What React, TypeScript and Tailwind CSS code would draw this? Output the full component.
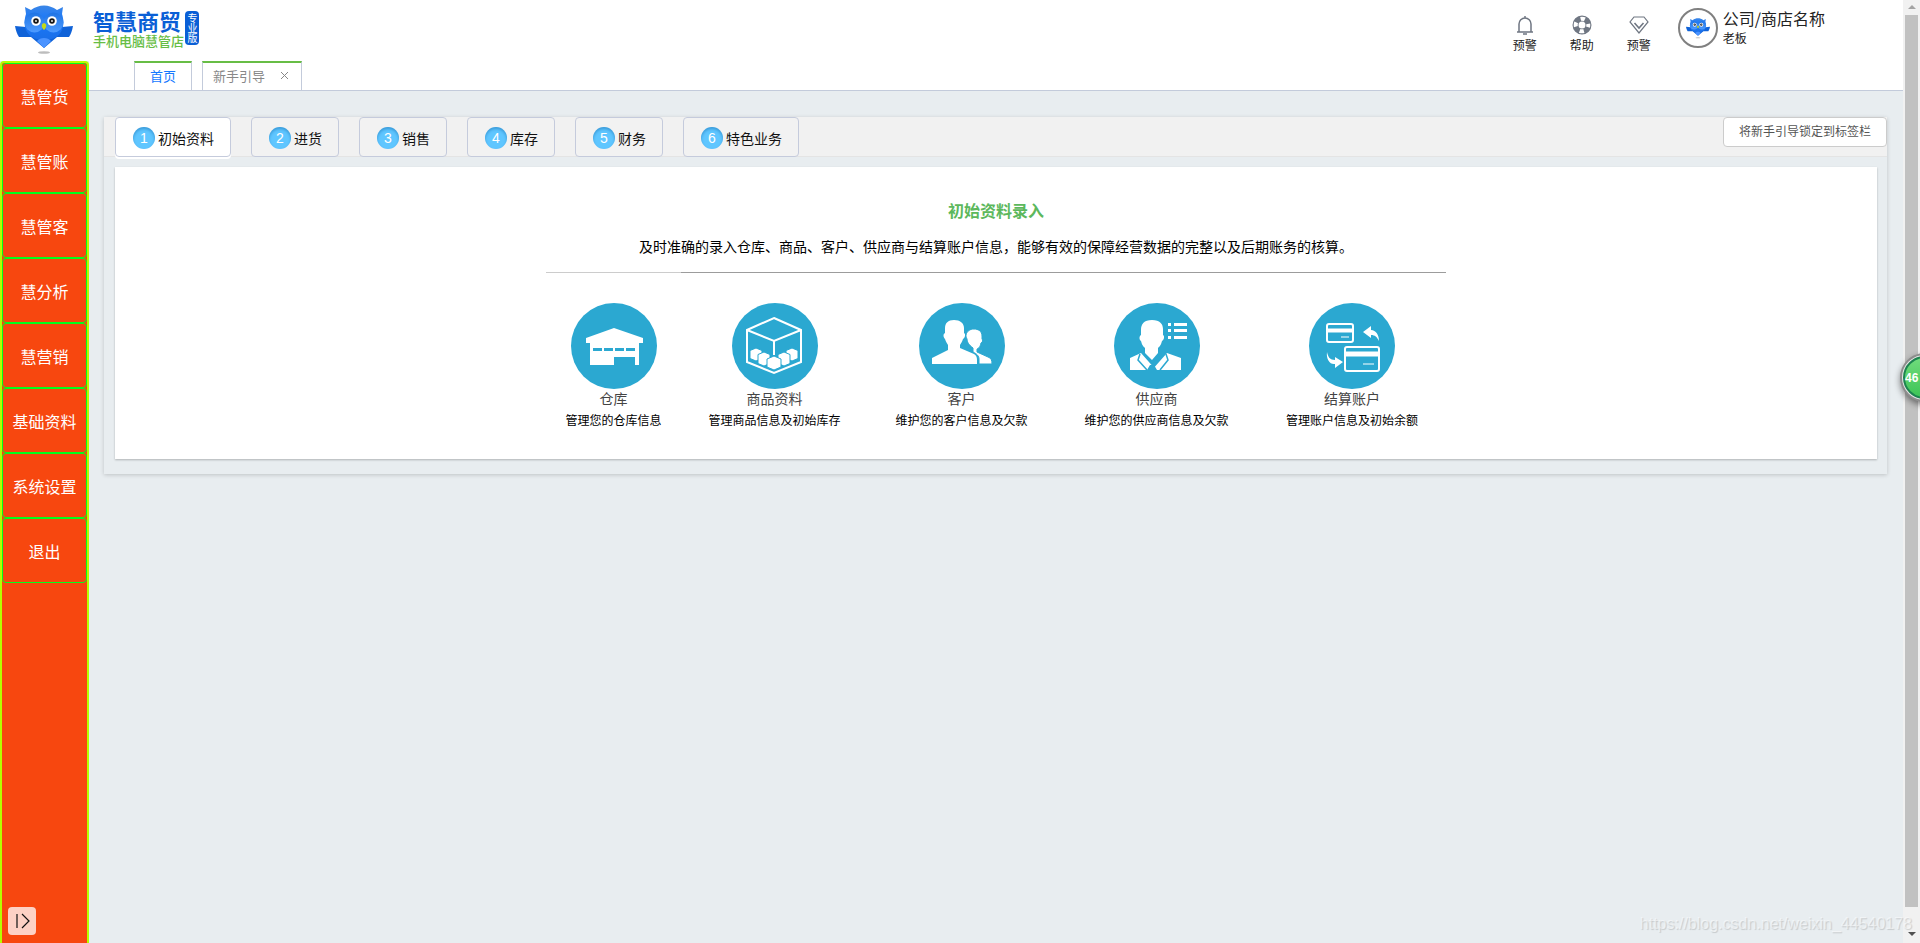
import React, { useState } from "react";

const MENU = ["慧管货", "慧管账", "慧管客", "慧分析", "慧营销", "基础资料", "系统设置", "退出"];

const STEPS = ["初始资料", "进货", "销售", "库存", "财务", "特色业务"];

function Owl({ className }: { className?: string }) {
  return (
    <svg viewBox="0 0 58 52" className={className} aria-hidden="true">
      <defs>
        <linearGradient id="owlHead" x1="0" y1="0" x2="0" y2="1">
          <stop offset="0" stopColor="#3b86e6" />
          <stop offset="0.4" stopColor="#1a78fa" />
          <stop offset="1" stopColor="#1a6fe8" />
        </linearGradient>
        <linearGradient id="owlFace" x1="0" y1="0" x2="0" y2="1">
          <stop offset="0" stopColor="#1f74e4" />
          <stop offset="1" stopColor="#4d9bff" />
        </linearGradient>
      </defs>
      <ellipse cx="29" cy="49.500" rx="6" ry="1.300" fill="#bdbdbd" />
      <path d="M0 23l11 1 4 6h28l4-6 11-1c-1 5-2 8-4 11H42L29 45 16 34H4c-2-3-3-6-4-11z" fill="#0f62d8" />
      <path d="M10 4l6 3c8-6 18-6 26 0l6-3-1 7c2 6 2 13-1 18-4 6-10 8-17 8s-13-2-17-8c-3-5-3-12-1-18z" fill="url(#owlHead)" />
      <circle cx="19.500" cy="19.500" r="10" fill="url(#owlFace)" />
      <circle cx="38.500" cy="19.500" r="10" fill="url(#owlFace)" />
      <path d="M22 38c3-4 11-4 14 0l-7 7z" fill="#4a93ff" />
      <circle cx="21" cy="18" r="4.800" fill="#fff" />
      <circle cx="37" cy="18" r="4.800" fill="#fff" />
      <circle cx="21" cy="18" r="2.800" fill="#151515" />
      <circle cx="37" cy="18" r="2.800" fill="#151515" />
      <circle cx="21" cy="18" r="0.900" fill="#fff" />
      <circle cx="37" cy="18" r="0.900" fill="#fff" />
      <path d="M29 20c3 1 3 4 0 7-3-3-3-6 0-7z" fill="#c5d917" />
    </svg>
  );
}

function BellIcon() {
  return (
    <svg viewBox="0 0 20 20" className="w-5 h-5" fill="none" stroke="#6f7682" strokeWidth="1.500" aria-hidden="true">
      <path d="M4 16.500V9a6 6 0 0 1 12 0v7.500M2 17h16M10 1v2.500M8 19h4" />
    </svg>
  );
}

function HelpIcon() {
  return (
    <svg viewBox="0 0 20 20" className="w-5 h-5" aria-hidden="true">
      <circle cx="10" cy="10" r="6.500" fill="none" stroke="#6f7682" strokeWidth="6" />
      <circle cx="10" cy="10" r="6.300" fill="none" stroke="#fff" strokeWidth="4" strokeDasharray="4.400 5.496" strokeDashoffset="2.200" />
    </svg>
  );
}

function DiamondIcon() {
  return (
    <svg viewBox="0 0 20 20" className="w-5 h-5" fill="none" stroke="#6f7682" aria-hidden="true">
      <path d="M5 2h10l4 5-9 11L1 7z" strokeWidth="1.200" />
      <path d="M5.500 8l4.500 5 4.500-5" strokeWidth="1.600" />
    </svg>
  );
}

const warehouse = (
  <g>
    <path d="M15 35l28-10 29 10v5h-4v22h-4v-8H43v8H19V40h-4z" fill="#fff" />
    <path d="M22 46.500h43" stroke="#2ba8d1" strokeWidth="3" strokeDasharray="9 2" />
  </g>
);

const goods = (
  <g>
    <path d="M42 15l27 12v32L42 70 15 59V27zM15 27l27 11 27-11M42 38v14" fill="none" stroke="#fff" strokeWidth="2" />
    <g fill="#fff" stroke="#2ba8d1" strokeWidth="1">
      <path d="M24 45l6 2.500v8L24 58l-6-2.500v-8zM60 45l6 2.500v8L60 58l-6-2.500v-8z" />
      <path d="M32 49l6 2.500v9L32 63l-6-2.500v-9zM52 49l6 2.500v9L52 63l-6-2.500v-9z" />
      <path d="M42 53l7 3v8l-7 3-7-3v-8z" />
    </g>
  </g>
);

const customers = (
  <g fill="#fff">
    <path d="M26 25c0-5 3-8 9-8s10 3 10 8v5c2 1 1 5-1 6-1 3-2 4-3 6v3l14 6c2 1 3 3 3 6v4H13v-6l16-8v-5c-1-2-2-3-3-6-2-2-2-5 0-6z" />
    <path d="M47 32c1-4 4-6 8-6s8 2 8 7v3c1 1 1 3-1 4-1 4-2 5-4 6v3l11 5c3 1 4 3 4 7H60v-5c0-3-2-5-6-7v-4c-4-3-6-6-6-9-1-2-1-3-1-4z" stroke="#2ba8d1" strokeWidth="1" />
  </g>
);

const supplier = (
  <g fill="#fff">
    <path d="M27 27c0-6 3-10 11-10s11 4 11 9v6c2 1 1 5-1 6-1 4-2 5-4 7v5l-6 7-7-7v-5c-2-2-3-3-4-7-2-1-2-5 0-6z" />
    <path d="M16 67V55l11-5 15 17zM67 67V55l-14-5-15 17z" />
    <path d="M28 49l10 11 11-11M26 51l-2 6 9 10M52 51l2 6-8 10" fill="none" stroke="#2ba8d1" strokeWidth="1.500" />
    <path d="M36 62h4l3 5H33z" fill="#2ba8d1" />
    <path d="M54 20h3v3h-3zM60 20h13v3H60zM54 26h3v3h-3zM60 26h13v3H60zM54 33h3v3h-3zM60 33h13v3H60z" />
  </g>
);

const accounts = (
  <g fill="none" stroke="#fff" strokeWidth="2">
    <rect x="18" y="21" width="26" height="18" rx="2" />
    <path d="M18 27.500h26" strokeWidth="4" />
    <path d="M32 34h8" strokeWidth="1" />
    <rect x="36" y="44" width="34" height="24" rx="2" />
    <path d="M36 51h34" strokeWidth="5" />
    <path d="M54 61h11" strokeWidth="1" />
    <path d="M54 29l8-6v4c5 0 8 5 8 11-2-4-4-6-8-6v3zM34 59l-8-5v3c-5 0-7-3-8-8-1 7 3 13 8 12v4z" fill="#fff" stroke="none" />
  </g>
);

const CARDS = [
  { title: "仓库", desc: "管理您的仓库信息", icon: warehouse },
  { title: "商品资料", desc: "管理商品信息及初始库存", icon: goods },
  { title: "客户", desc: "维护您的客户信息及欠款", icon: customers },
  { title: "供应商", desc: "维护您的供应商信息及欠款", icon: supplier },
  { title: "结算账户", desc: "管理账户信息及初始余额", icon: accounts },
];

function Sidebar() {
  return (
    <aside className="flex flex-col w-[89px] shrink-0 bg-[#f7470f] border-2 border-b-0 border-[#b4ff00] rounded-t">
      <nav className="flex flex-col">
        {MENU.map((item) => (
          <button
            key={item}
            className="h-[65px] border border-[#00ff1e] rounded text-white text-base whitespace-nowrap"
          >
            {item}
          </button>
        ))}
      </nav>
      <button
        aria-label="展开"
        className="flex items-center justify-center w-7 h-7 mt-auto mb-2 ml-[6px] rounded-sm bg-[#fdd1c5]"
      >
        <svg viewBox="0 0 16 16" className="w-4 h-4" fill="none" stroke="#111" strokeWidth="1.200" aria-hidden="true">
          <path d="M3 1v14M8 1l7 7-7 7" />
        </svg>
      </button>
    </aside>
  );
}

function Header() {
  const tools = [
    { label: "预警", icon: <BellIcon /> },
    { label: "帮助", icon: <HelpIcon /> },
    { label: "预警", icon: <DiamondIcon /> },
  ];

  return (
    <header className="flex justify-between h-[61px] bg-white">
      <div className="flex items-start pl-[15px] pt-[3px]">
        <Owl className="w-[58px] h-[52px]" />
        <div className="ml-5 pt-1">
          <p className="text-[22px] leading-[26px] font-bold text-[#0a5fd6]">智慧商贸</p>
          <p className="text-[13px] leading-4 font-medium text-[#67bd45]">手机电脑慧管店</p>
        </div>
        <div className="flex items-center justify-center w-[14px] h-[34px] mt-2 ml-px rounded-sm bg-[#0a5fd6] text-white text-[10px] leading-[14px] [writing-mode:vertical-rl]">
          专业版
        </div>
      </div>
      <div className="flex items-start pr-[78px]">
        <div className="flex gap-[33px] pt-[15px] pr-[27px]">
          {tools.map((tool, i) => (
            <button key={i} className="flex flex-col items-center text-xs leading-5 text-[#222]">
              {tool.icon}
              {tool.label}
            </button>
          ))}
        </div>
        <div className="flex pt-2">
          <div className="flex items-center justify-center w-10 h-10 rounded-full border-2 border-[#808080]">
            <Owl className="w-6 h-6" />
          </div>
          <div className="ml-[5px] text-[#222]">
            <p className="text-base leading-5">公司/商店名称</p>
            <p className="text-xs leading-5">老板</p>
          </div>
        </div>
      </div>
    </header>
  );
}

function PageTabs() {
  return (
    <div className="flex items-end gap-[10px] h-[30px] pl-[45px] bg-white border-b border-[#c3cbdb]">
      <button className="h-[29px] px-[15px] pb-[2px] border-x border-t-2 border-x-[#c3cbdb] border-t-[#67bd45] text-[13px] text-[#1478ff]">
        首页
      </button>
      <div className="flex items-center h-[29px] pl-[10px] pr-3 pb-[2px] border-x border-t-2 border-x-[#c3cbdb] border-t-[#67bd45] text-[13px] text-[#888]">
        <span>新手引导</span>
        <button aria-label="关闭" className="ml-[15px]">
          <svg viewBox="0 0 9 9" className="w-[9px] h-[9px]" stroke="#888" aria-hidden="true">
            <path d="M1 1l7 7M8 1L1 8" />
          </svg>
        </button>
      </div>
    </div>
  );
}

function Guide() {
  const [active, setActive] = useState(0);

  return (
    <section className="mt-[26px] ml-[15px] mr-4 pb-[15px] shadow-[0_1px_4px_rgba(0,0,0,0.18)]">
      <div className="flex justify-between h-10 pl-[11px] bg-[#f1f1f1] border-b border-[#e4e4e4]">
        <div className="flex gap-5">
          {STEPS.map((step, i) => (
            <button
              key={step}
              onClick={() => setActive(i)}
              className={`flex items-center h-10 gap-[3px] pl-[17px] pr-4 pt-[2px] border border-[#c5cbdc] rounded text-sm text-[#111] ${
                i === active ? "bg-white shadow-[0_2px_0_#fff]" : "bg-[#f2f2f2]"
              }`}
            >
              <span className="flex items-center justify-center w-[22px] h-[22px] rounded-full bg-[#5fc6ff] font-['Liberation_Sans'] text-white shadow-[inset_0_2px_3px_rgba(0,90,160,0.4)]">
                {i + 1}
              </span>
              {step}
            </button>
          ))}
        </div>
        <button className="h-[30px] px-[15px] pb-[2px] bg-white border border-[#ccc] rounded-sm text-xs text-[#555]">
          将新手引导锁定到标签栏
        </button>
      </div>

      <div className="mt-[10px] ml-[11px] mr-[10px] pt-[31px] pb-[26px] bg-white text-center shadow-[0_1px_2px_rgba(0,0,0,0.25)]">
        <h1 className="text-base leading-6 font-bold text-[#5cb85c]">初始资料录入</h1>
        <p className="mt-3 text-sm leading-6 text-black">
          及时准确的录入仓库、商品、客户、供应商与结算账户信息，能够有效的保障经营数据的完整以及后期账务的核算。
        </p>
        <div className="w-[900px] mx-auto">
          <div className="flex h-px mt-[14px]">
            <div className="w-[135px] bg-[#ccc]" />
            <div className="grow bg-[#9c9c9c]" />
          </div>
          <div className="grid grid-cols-[135px_187px_187px_203px_1fr] mt-[30px]">
            {CARDS.map((card) => (
              <a key={card.title} href="#" className="flex flex-col items-center whitespace-nowrap">
                <svg viewBox="0 0 86 86" className="w-[86px] h-[86px]" aria-hidden="true">
                  <circle cx="43" cy="43" r="43" fill="#2ba8d1" />
                  {card.icon}
                </svg>
                <span className="text-sm leading-[18px] text-[#444]">{card.title}</span>
                <span className="text-xs leading-[26px] text-black">{card.desc}</span>
              </a>
            ))}
          </div>
        </div>
      </div>
    </section>
  );
}

function ScrollRail() {
  return (
    <div className="flex flex-col items-center justify-between w-[17px] shrink-0 bg-[#f1f1f1]">
      <svg viewBox="0 0 17 15" className="w-[17px] h-[15px]" aria-hidden="true">
        <path d="M5 9l4-4 4 4z" fill="#a3a3a3" />
      </svg>
      <div className="w-[13px] grow mb-[18px] bg-[#c1c1c1]" />
      <svg viewBox="0 0 17 18" className="w-[17px] h-[18px]" aria-hidden="true">
        <path d="M5 7h8l-4 4z" fill="#505050" />
      </svg>
    </div>
  );
}

export default function App() {
  return (
    <div className="relative flex min-h-screen overflow-hidden bg-[#e8edf0] font-['Noto_Sans_CJK_SC',sans-serif]">
      <div className="flex flex-col grow">
        <Header />
        <div className="flex grow">
          <Sidebar />
          <main className="grow">
            <PageTabs />
            <Guide />
          </main>
        </div>
      </div>
      <ScrollRail />

      <div className="absolute top-[353px] -right-[29px] flex items-center w-[49px] h-[49px] pl-px rounded-full border-2 border-[#8d8d8d] bg-[#e6e6e6] shadow-[0_3px_6px_rgba(0,0,0,0.45)]">
        <div className="flex items-center w-[43px] h-[43px] rounded-full border-2 border-[#1d8450] bg-linear-to-b from-[#6fdc7c] to-[#3cc456] font-['Liberation_Sans'] text-xs font-bold text-white">
          46
        </div>
      </div>
      <p className="absolute bottom-[7px] right-2 font-['Liberation_Sans'] text-base text-white/50 [text-shadow:1px_1px_1px_rgba(0,0,0,0.15)]">
        https://blog.csdn.net/weixin_44540178
      </p>
    </div>
  );
}
